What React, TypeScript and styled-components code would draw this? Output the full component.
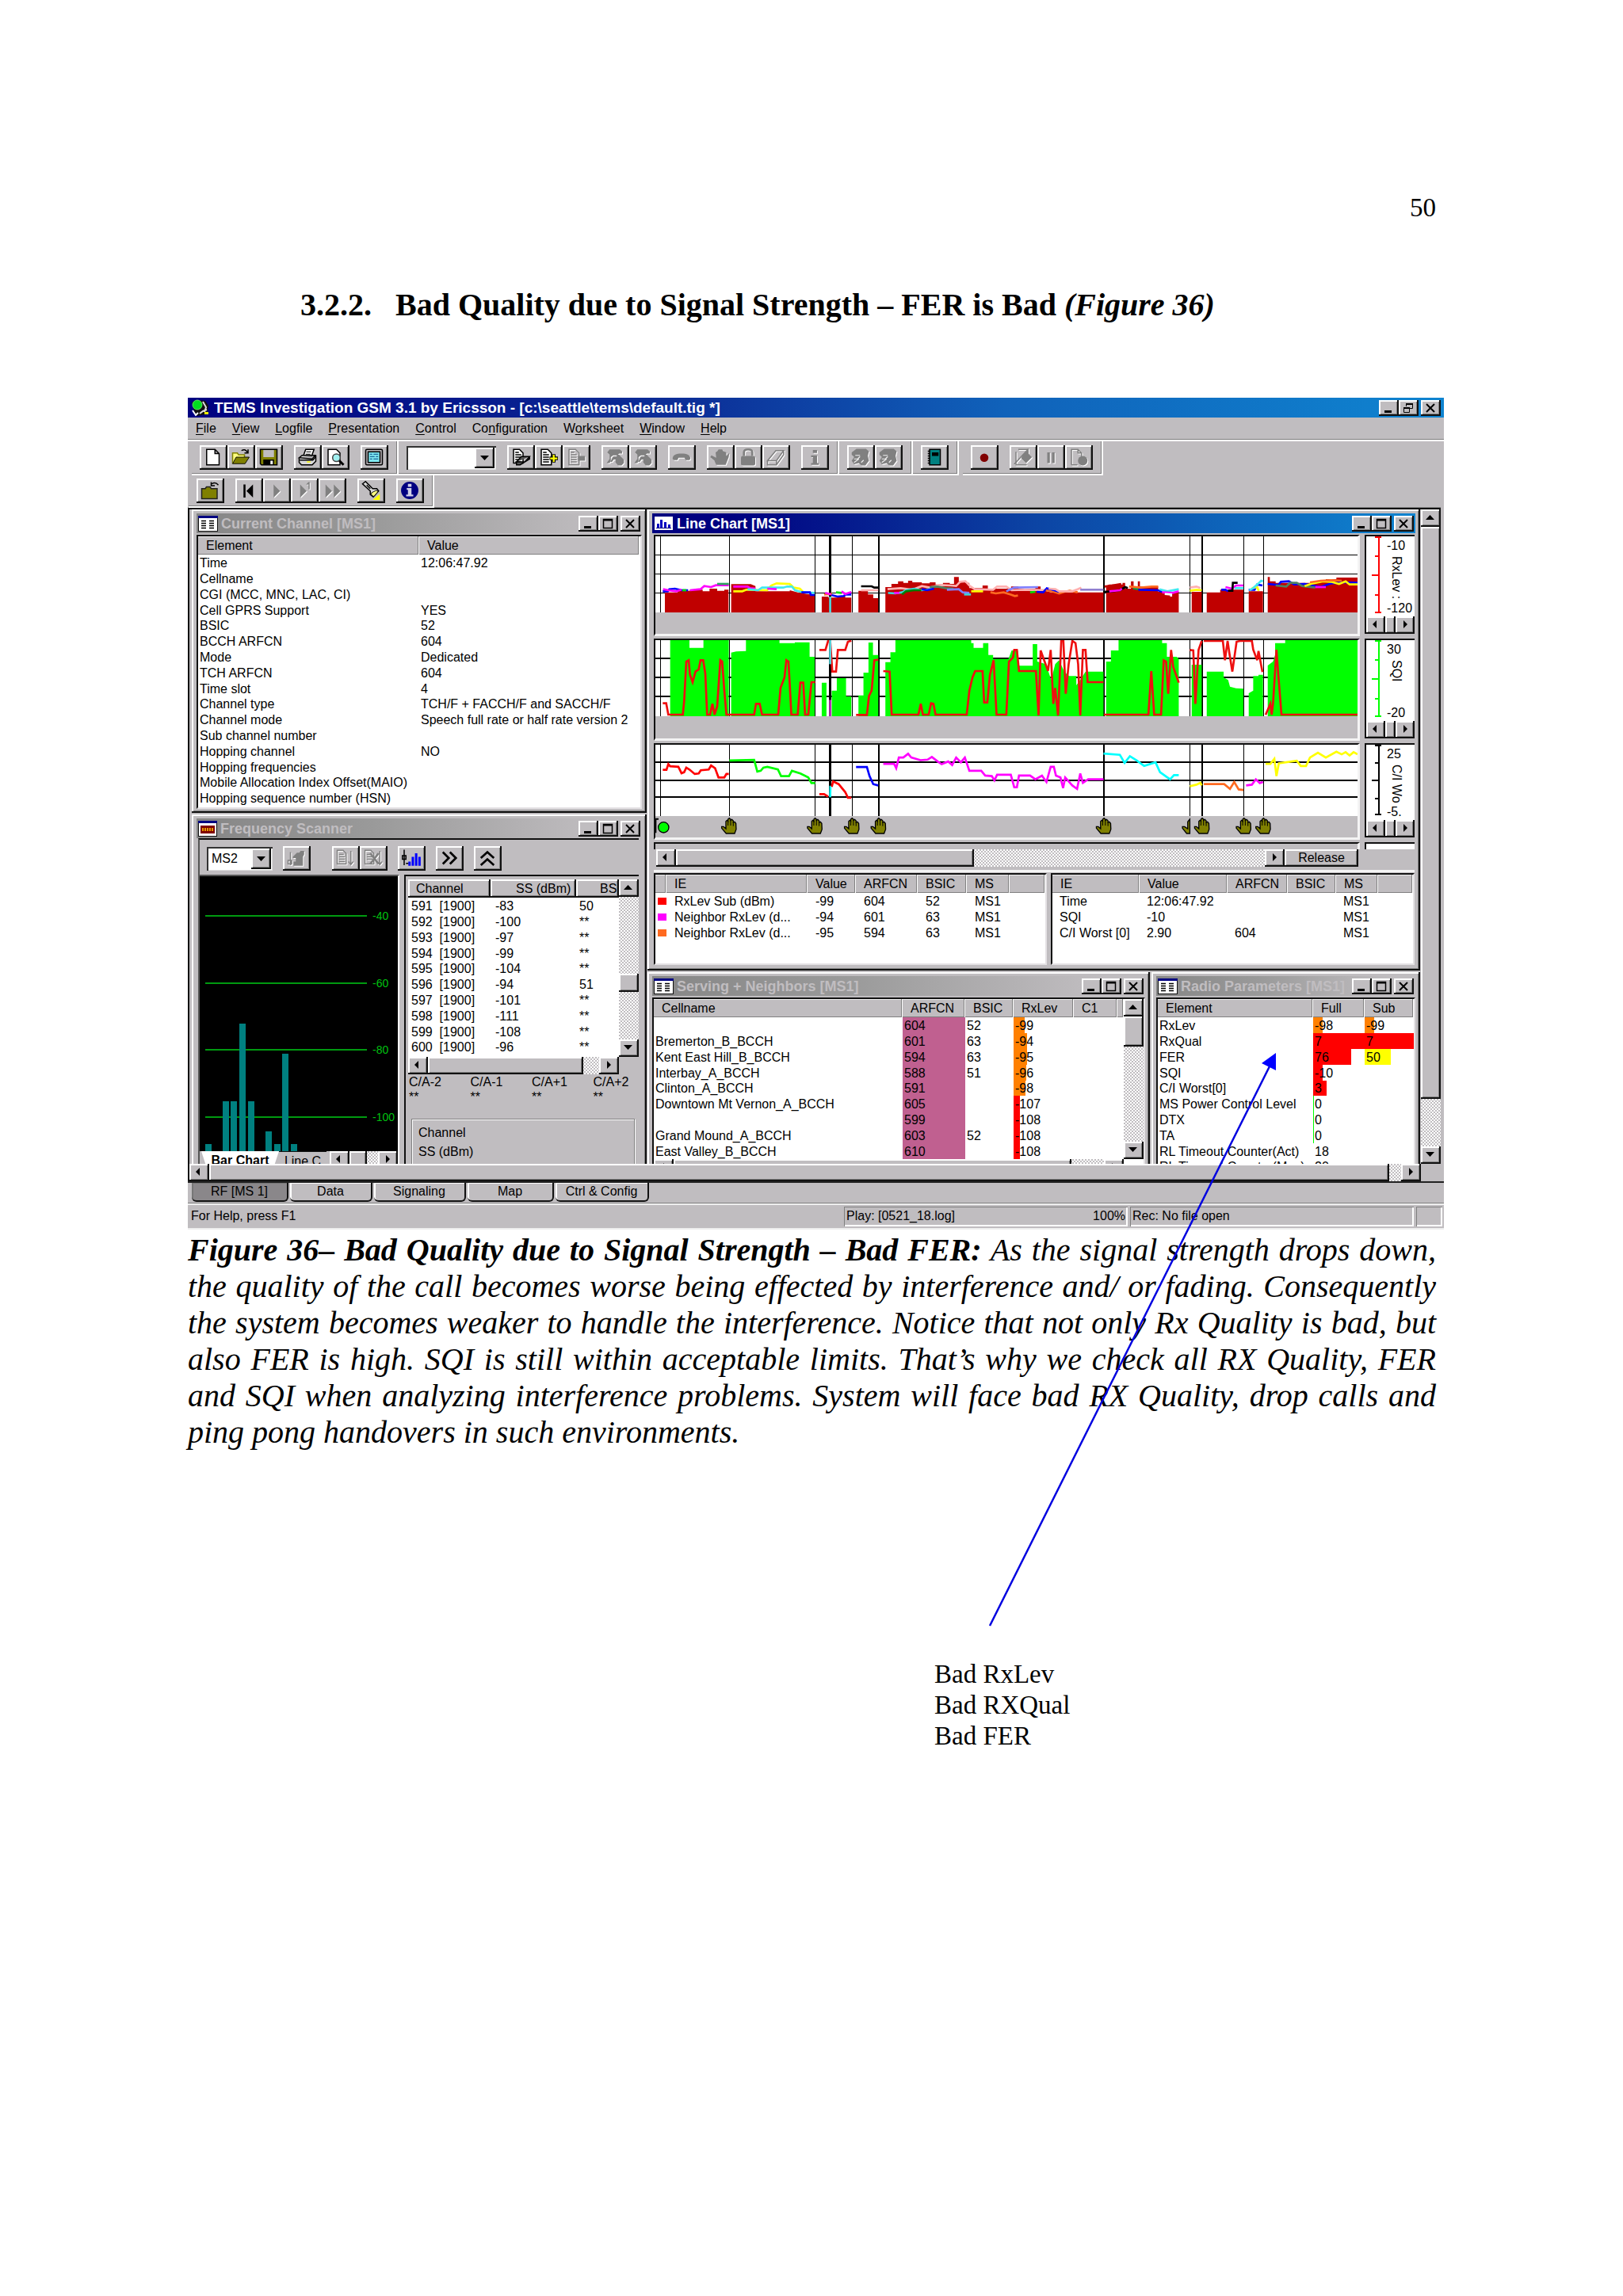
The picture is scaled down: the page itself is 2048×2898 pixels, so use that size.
import React from "react";
import styled, { createGlobalStyle, css } from "styled-components";

const GREY = "#c0bdc0";
const SANS = '"Liberation Sans", Arial, sans-serif';
const SERIF = '"Liberation Serif", "Times New Roman", serif';

const GlobalStyle = createGlobalStyle`
  *, *::before, *::after { box-sizing: border-box; }
  body { margin: 0; background: #fff; color: #000; }
  button, select { font: inherit; color: inherit; margin: 0; }
`;

/* ---------- bevels ---------- */

const raised = css`
  background: ${GREY};
  border: 0;
  border-radius: 0;
  box-shadow: inset -2px -2px 0 #111, inset 2px 2px 0 #fff, inset -3px -3px 0 #808080;
`;

const dither = css`
  background: repeating-conic-gradient(#fff 0 25%, ${GREY} 0 50%) 0 0 / 4px 4px;
`;

/* ---------- document ---------- */

const Page = styled.main`
  min-height: 2898px;
  padding: 243px 226px 0 237px;
  font-family: ${SERIF};
`;

const PageNumber = styled.div`
  padding-right: 10px;
  text-align: right;
  font-size: 33px;
  line-height: 39px;
`;

const Heading = styled.h1`
  display: flex;
  gap: 30px;
  margin: 80px 0 94px 142px;
  font-size: 40px;
  line-height: 46px;
  font-weight: bold;
`;

const Figure = styled.figure`
  position: relative;
  margin: 0;
`;

const Caption = styled.figcaption`
  padding: 3px 10px 0 0;
  font-size: 40px;
  line-height: 46px;
  font-style: italic;
  text-align: justify;
`;

const Notes = styled.p`
  margin: 263px 0 0 942px;
  font-size: 33px;
  line-height: 39px;
`;

const Arrow = styled.svg`
  position: absolute;
  right: 211px;
  top: 827px;
  width: 362px;
  height: 724px;
  overflow: visible;
  pointer-events: none;
`;

/* ---------- application frame ---------- */

const Application = styled.section`
  background: ${GREY};
  font-family: ${SANS};
  font-size: 16px;
  line-height: 20px;
  white-space: nowrap;
`;

const MainTitle = styled.header`
  display: flex;
  align-items: center;
  height: 25px;
  padding: 0 4px;
  gap: 6px;
  background: linear-gradient(90deg, #000080, #0c2f98 40%, #1062ba 65%, #0f84d0);
  color: #fff;
  font-size: 19px;
  font-weight: bold;
`;

const TitleText = styled.span`
  flex: 1;
  min-width: 0;
  overflow: hidden;
`;

const WinButtons = styled.div`
  display: flex;
`;

const WinButton = styled.button<{ $apart?: boolean }>`
  ${raised}
  display: grid;
  place-items: center;
  width: 25px;
  height: 20px;
  padding: 0;
  margin-left: ${(p) => (p.$apart ? 3 : 0)}px;
`;

const MenuBar = styled.nav`
  display: flex;
  align-items: center;
  height: 30px;
  border-bottom: 2px solid #fff;
  box-shadow: inset 0 -1px 0 #808080;
`;

const MenuItem = styled.button`
  border: 0;
  background: none;
  padding: 0 10px;
  u { text-underline-offset: 2px; }
`;

const BarRow = styled.div<{ $second?: boolean }>`
  display: flex;
  height: ${(p) => (p.$second ? 41 : 43)}px;
`;

const Bar = styled.div<{ $gap?: number }>`
  display: flex;
  align-items: center;
  gap: 14px;
  padding: 0 11px 0 10px;
  margin-left: ${(p) => p.$gap || 0}px;
  border-right: 2px solid #fff;
  border-bottom: 2px solid #fff;
  box-shadow: inset -1px -1px 0 #808080;
`;

const Group = styled.div`
  display: flex;
`;

const ToolButton = styled.button`
  ${raised}
  display: grid;
  place-items: center;
  width: 35px;
  height: 31px;
  padding: 0 2px 2px 0;
  svg { display: block; }
  &:disabled svg { filter: drop-shadow(1px 1px 0 #fff); }
`;

const Combo = styled.label<{ $w: number }>`
  display: flex;
  width: ${(p) => p.$w}px;
  height: 30px;
  padding: 2px;
  background: #fff;
  box-shadow: inset 2px 2px 0 #333, inset -1px -1px 0 #ddd;
  select {
    flex: 1;
    min-width: 0;
    appearance: none;
    border: 0;
    padding: 0 0 0 4px;
    background: none;
    border-radius: 0;
  }
`;

const ComboArrow = styled.span`
  ${raised}
  display: grid;
  place-items: center;
  width: 25px;
`;

/* ---------- MDI area ---------- */

const Workspace = styled.div`
  display: grid;
  grid-template-columns: 1fr 25px;
  grid-template-rows: 826px 22px;
  margin-right: 4px;
  border-top: 2px solid #111;
  border-left: 2px solid #111;
  box-shadow: 0 -1px 0 #808080;
`;

const Desk = styled.div`
  display: flex;
  gap: 1px;
  padding: 0 1px 0 3px;
  overflow: hidden;
`;

const Column = styled.div<{ $w?: number }>`
  display: flex;
  flex-direction: column;
  gap: 2px;
  flex: ${(p) => (p.$w ? `0 0 ${p.$w}px` : "1 1 0")};
  min-width: 0;
`;

const Side = styled.div`
  display: flex;
  gap: 2px;
`;

const Win = styled.section<{ $h: number; $w?: number }>`
  display: flex;
  flex-direction: column;
  flex: ${(p) => (p.$w ? `0 0 ${p.$w}px` : "1 1 0")};
  height: ${(p) => p.$h}px;
  min-width: 0;
  padding: 5px 6px;
  background: ${GREY};
  box-shadow: inset -2px -2px 0 #111, inset 2px 2px 0 #fff, inset -3px -3px 0 #808080;
`;

const FixedWin = styled(Win)`
  flex: 0 0 ${(p) => p.$h}px;
`;

const WinTitle = styled.header<{ $active?: boolean }>`
  display: flex;
  align-items: center;
  flex: 0 0 25px;
  gap: 4px;
  padding: 0 2px 0 2px;
  font-size: 18px;
  font-weight: bold;
  color: ${(p) => (p.$active ? "#fff" : GREY)};
  background: ${(p) =>
    p.$active
      ? "linear-gradient(90deg, #000080 10%, #0c44a4 50%, #0f84d0)"
      : `linear-gradient(90deg, #868686, #9a9a9a 40%, ${GREY} 90%)`};
`;

const Client = styled.div`
  flex: 1;
  min-height: 0;
  margin-top: 2px;
  overflow: hidden;
  background: #fff;
  border-top: 2px solid #111;
  border-left: 2px solid #111;
  border-right: 2px solid #e4e2e4;
  border-bottom: 2px solid #e4e2e4;
`;

/* ---------- tables ---------- */

const Grid = styled.table<{ $pad?: number; $head?: number }>`
  width: 100%;
  table-layout: fixed;
  border-collapse: separate;
  border-spacing: 0;
  th {
    height: 23px;
    padding: 0 0 0 ${(p) => p.$head ?? 10}px;
    text-align: left;
    font-weight: normal;
    line-height: 20px;
    background: ${GREY};
    overflow: hidden;
    box-shadow: inset -1px 0 0 #fff, inset -2px -1px 0 #808080, inset 0 1px 0 #eee;
  }
  td {
    height: 20px;
    padding: 0 0 0 ${(p) => p.$pad ?? 2}px;
    line-height: 19px;
    overflow: hidden;
  }
  tbody tr:nth-child(5n) td { height: 19px; }
`;

const Cell = styled.td<{ $fill?: string; $w?: string }>`
  ${(p) =>
    p.$fill &&
    css`
      background: linear-gradient(${p.$fill}, ${p.$fill}) 0 0 / ${p.$w || "100%"} 100% no-repeat;
    `}
`;

const SwatchCell = styled.td`
  && { padding-left: 3px; }
`;

const Swatch = styled.span<{ $c: string }>`
  display: block;
  width: 11px;
  height: 9px;
  background: ${(p) => p.$c};
`;

/* ---------- scroll bars ---------- */

const Scroll = styled.div<{ $v?: boolean }>`
  ${dither}
  display: flex;
  flex-direction: ${(p) => (p.$v ? "column" : "row")};
  ${(p) => (p.$v ? "width: 25px;" : "height: 22px; width: 100%;")}
`;

const ScrollButton = styled.button`
  ${raised}
  display: grid;
  place-items: center;
  flex: 0 0 auto;
  width: 25px;
  height: 22px;
  padding: 0 2px 2px 0;
`;

const Thumb = styled.div<{ $size?: number }>`
  ${raised}
  flex: ${(p) => (p.$size ? `0 0 ${p.$size}px` : "1 1 0")};
`;

const Gap = styled.div<{ $size?: number }>`
  flex: ${(p) => (p.$size ? `0 0 ${p.$size}px` : "1 1 0")};
`;

const PushButton = styled.button`
  ${raised}
  flex: 0 0 93px;
  padding: 0;
`;

/* ---------- line chart window ---------- */

const ChartClient = styled.div`
  display: flex;
  flex-direction: column;
  flex: 1;
  min-height: 0;
  margin: 2px 1px 2px 2px;
`;

const ChartRow = styled.div<{ $h: number }>`
  display: grid;
  grid-template-columns: 1fr 63px;
  column-gap: 6px;
  flex: 0 0 ${(p) => p.$h}px;
  padding-bottom: ${(p) => (p.$h > 20 ? 3 : 0)}px;
`;

const PlotPane = styled.div`
  border-top: 2px solid #111;
  border-left: 2px solid #111;
  border-right: 3px solid #f4f4f4;
  border-bottom: 3px solid #f4f4f4;
  min-width: 0;
  overflow: hidden;
`;

const StubPane = styled(PlotPane)`
  border-bottom: 0;
`;

const Plot = styled.svg<{ $h: number }>`
  display: block;
  width: 100%;
  height: ${(p) => p.$h}px;
`;

const AxisPane = styled.div<{ $stub?: boolean }>`
  display: flex;
  flex-direction: column;
  background: #fff;
  border-top: 2px solid #111;
  border-left: 2px solid #111;
  margin-bottom: ${(p) => (p.$stub ? 0 : 3)}px;
  min-height: 0;
  overflow: hidden;
`;

const AxisBody = styled.div`
  display: grid;
  grid-template-columns: 24px 1fr;
  flex: 1;
  min-height: 0;
`;

const AxisText = styled.div`
  display: flex;
  flex-direction: column;
  justify-content: space-between;
  padding: 3px 0 1px 2px;
  min-height: 0;
  line-height: 18px;
`;

const AxisName = styled.span`
  flex: 1;
  min-height: 0;
  overflow: hidden;
  writing-mode: vertical-rl;
  padding-top: 4px;
  margin-left: 1px;
  width: 20px;
`;

const AxisScroll = styled(Scroll)`
  flex: 0 0 22px;
  button { width: 24px; }
`;

const ScrollRow = styled.div`
  display: grid;
  grid-template-columns: 1fr 71px;
  padding: 0 0 3px 3px;
  border-bottom: 3px solid #f4f4f4;
  flex: 0 0 29px;
`;

const Lists = styled.div`
  display: grid;
  grid-template-columns: 496px 1fr;
  column-gap: 5px;
  flex: 1;
  min-height: 0;
  padding: 1px 0 0;
`;

const List = styled.div`
  background: #fff;
  border-top: 2px solid #111;
  border-left: 2px solid #111;
  border-right: 2px solid #e4e2e4;
  border-bottom: 2px solid #e4e2e4;
  overflow: hidden;
`;

/* ---------- frequency scanner ---------- */

const ScanBody = styled.div`
  display: flex;
  flex-direction: column;
  flex: 1;
  min-height: 0;
  margin: 0 4px 0 2px;
  border-top: 2px solid #111;
  border-left: 2px solid #555;
`;

const ScanBar = styled.div`
  display: flex;
  align-items: center;
  flex: 0 0 44px;
  gap: 13px;
  padding: 3px 9px 0;
`;

const ScanSplit = styled.div`
  display: grid;
  grid-template-columns: 250px 1fr;
  column-gap: 3px;
  flex: 1;
  min-height: 0;
`;

const ScanLeft = styled.div`
  border-top: 2px solid #555;
  border-right: 2px solid #fff;
  margin-right: -2px;
`;

const ScanRight = styled.div`
  display: flex;
  flex-direction: column;
  margin-left: 5px;
  border-top: 2px solid #111;
  border-left: 2px solid #111;
  padding: 4px 0 0 3px;
`;

const BarPlot = styled.svg`
  display: block;
  width: 100%;
  height: 347px;
  background: #000;
  font-size: 14px;
`;

const SheetTabs = styled.div`
  display: flex;
  height: 24px;
  padding-left: 2px;
`;

const SheetTab = styled.button<{ $on?: boolean; $w: number }>`
  flex: 0 0 ${(p) => p.$w}px;
  height: 24px;
  padding: 0;
  line-height: 20px;
  border: 0;
  text-align: center;
  overflow: hidden;
  font-weight: ${(p) => (p.$on ? "bold" : "normal")};
  background: ${(p) => (p.$on ? "#fff" : GREY)};
  border-top: ${(p) => (p.$on ? 0 : 1)}px solid #111;
  clip-path: ${(p) => (p.$on ? "polygon(0 0, 100% 0, 92% 100%, 8% 100%)" : "none")};
`;

const ListArea = styled.div`
  display: grid;
  grid-template-columns: 1fr 25px;
  grid-template-rows: 224px 22px;
`;

const ScanTable = styled(Grid)`
  background: #fff;
  th { ${raised} }
  th:nth-child(2) { padding-left: 32px; }
  th:nth-child(3) { padding-left: 30px; }
  tbody td:nth-child(1) { padding-left: 4px; }
  tbody td:nth-child(2) { padding-left: 6px; }
  tbody td:nth-child(3) { padding-left: 4px; }
`;

const TableBox = styled.div`
  background: #fff;
  overflow: hidden;
`;

const Adjacent = styled.dl`
  display: grid;
  grid-template-columns: repeat(4, 1fr);
  margin: 0 -20px 0 1px;
  line-height: 19px;
  div { min-width: 0; }
  dt, dd { margin: 0; }
`;

const ScanGroup = styled.div`
  display: flex;
  flex-direction: column;
  margin: 18px 5px 0 4px;
  padding: 7px 8px;
  gap: 4px;
  height: 80px;
  border: 1px solid #808080;
  box-shadow: inset 1px 1px 0 #fff, 1px 1px 0 #fff;
`;

/* ---------- worksheet tabs and status bar ---------- */

const Sheets = styled.div`
  display: flex;
  gap: 2px;
  height: 28px;
  padding-left: 5px;
  border-top: 2px solid #222;
  border-bottom: 1px solid #808080;
`;

const Sheet = styled.button<{ $w: number; $on?: boolean }>`
  width: ${(p) => p.$w}px;
  height: 24px;
  padding: 0;
  border: 0;
  border-right: 2px solid #111;
  border-bottom: 2px solid #111;
  border-radius: 0 0 6px 6px;
  background: ${(p) => (p.$on ? "#8a878a" : GREY)};
  box-shadow: inset 2px 1px 0 ${(p) => (p.$on ? "#777" : "#fff")};
`;

const Status = styled.footer`
  display: flex;
  align-items: center;
  gap: 3px;
  height: 33px;
  padding: 0 2px 1px 4px;
  border-top: 2px solid #eee;
  border-bottom: 2px solid #eee;
`;

const StatusText = styled.span`
  flex: 1;
`;

const StatusPane = styled.span<{ $w: number }>`
  display: flex;
  justify-content: space-between;
  width: ${(p) => p.$w}px;
  height: 25px;
  padding: 2px 3px;
  box-shadow: inset 1px 1px 0 #808080, inset -2px -2px 0 #fff;
`;

/* ---------- icons ---------- */

const Tri = ({ d }: { d: "l" | "r" | "u" | "d" }) => {
  const pts = { l: "7,1 7,11 2,6", r: "4,1 4,11 9,6", u: "0,9 11,9 5.5,3", d: "0,3 11,3 5.5,9" }[d];
  return (
    <svg width="11" height="12" viewBox="0 0 11 12" aria-hidden="true">
      <polygon points={pts} fill="#000" />
    </svg>
  );
};

const Ico = ({ children }: { children: React.ReactNode }) => (
  <svg width="26" height="24" viewBox="0 0 17 16" fill="none" strokeWidth="1" aria-hidden="true">
    {children}
  </svg>
);

const G = "#808080";

const docLines = (c: string) => <path d="M4 4h3M4 6h5M4 8h5M4 10h5M4 12h5" stroke={c} />;

const icons: Record<string, React.ReactNode> = {
  new: <path d="M3 1.500h7l3.500 3.500v9.500H3zM10 1.500v3.500h3.500" fill="#fff" stroke="#000" />,
  open: (
    <>
      <path d="M1.500 13.500v-9h4l1 1.500h5v2" fill="#ffff80" stroke="#808000" />
      <path d="M1.500 13.500l3-5.500h11l-3.500 5.500z" fill="#808000" stroke="#000" strokeWidth=".6" />
      <path d="M9 2.500q3-2 5 1.500M14.500 1.500v3h-3" stroke="#000" />
    </>
  ),
  save: (
    <>
      <path d="M1.500 1.500h14v13h-13l-1-1z" fill="#808000" stroke="#000" />
      <path d="M4 2h9v6H4z" fill={GREY} />
      <path d="M4 10h9v4.500H4z" fill="#000" />
      <path d="M10 11h2v3h-2z" fill="#fff" />
    </>
  ),
  print: (
    <>
      <path d="M5 7l2-5.500h7L12 7z" fill="#fff" stroke="#000" />
      <path d="M7.500 3.500h4M7 5.500h4" stroke="#000" strokeWidth=".7" />
      <path d="M1.500 8.500L4 6.500h11l-2.500 3zM1.500 8.500v4l2 2h9l3-3v-5" fill="#d8d8d8" stroke="#000" />
      <path d="M2 10.500h11l2.500-3" stroke="#000" />
      <path d="M8 12h3" stroke="#ff0" />
    </>
  ),
  preview: (
    <>
      <path d="M2.500 1.500h7l3 3v10h-10z" fill="#fff" stroke="#000" />
      <circle cx="9.500" cy="8.500" r="3.200" fill="#a0f0f0" stroke="#444" />
      <path d="M12 11l3.500 3.500" stroke="#000" strokeWidth="2" />
    </>
  ),
  panel: (
    <>
      <rect x="1.500" y="1.500" width="14" height="13" rx="1" fill={GREY} stroke="#000" />
      <rect x="3.500" y="3.500" width="10" height="9" fill="#7fe8f0" stroke="#000" />
      <path d="M5 5.500h2m1 0h4M5 7.500h4m1 0h2M5 9.500h2m1 0h4" stroke="#004080" strokeWidth=".8" />
    </>
  ),
  docErase: (
    <>
      <path d="M2.500 1.500h5l3 3v8.500h-8z" fill="#fff" stroke="#000" />
      {docLines("#000")}
      <path d="M5 12l4-4.500h7l-4 4.500zM5 12v2.500h3l8-5v-2" fill="#555" stroke="#000" />
    </>
  ),
  docAdd: (
    <>
      <path d="M2.500 1.500h5.500l3 3v10H2.500z" fill="#fff" stroke="#000" />
      {docLines("#000")}
      <path d="M13 5.500v7M9.500 9h7" stroke="#000" strokeWidth="3" />
      <path d="M13 6v6M10 9h6" stroke="#ff0" strokeWidth="1.500" />
    </>
  ),
  docRemove: (
    <>
      <path d="M2.500 1.500h5.500l3 3v10H2.500z" stroke={G} />
      {docLines(G)}
      <path d="M10 7h6v4h-6z" fill={G} />
    </>
  ),
  phones: (
    <>
      <path d="M2 4l2-2.500h8.500L14.500 3v2H12L10.500 6.500H7L5 8v3l-1 2H1.500L4 9.500V6z" fill={G} />
      <path d="M7 7.500h3V6h2l1.500 1.500L16 10v3l-2 2h-3l-2-2.500V10H7.500L6 12H4.500z" fill={G} />
    </>
  ),
  handset: <path d="M1 9.500C1 6 4 5 8.500 5s7.500 1 7.500 4.500l-1 1h-3l-1-2h-5l-1 2H2z" fill={G} />,
  handStop: <path d="M5 14.500L3.500 11 0 8l1-1.500 4 2L4.500 4l1.500-1 1-1.500h3l1 1.500 2.500 1V7L16 4.500 15.500 8 13 14.500z" fill={G} />,
  lock: (
    <>
      <path d="M5 7V4q0-2.500 3.500-2.500T12 4v3" stroke={G} strokeWidth="1.800" />
      <rect x="2.500" y="7" width="12" height="8" rx="1.500" fill={G} />
    </>
  ),
  eraser: <path d="M1.500 11l7-8.500h6.500L9 11zM1.500 11v3.500H9L15 6V2.500M9 11v3.500" stroke={G} />,
  infoGrey: <path d="M7 2h3.500v2.500H7zM5.500 6.500h5V13H12v1.500H5.500V13H7V8H5.500z" fill={G} />,
  cloud: (
    <>
      <path d="M1 4l4-3h8l2.500 2-1 4 1 4-3 4H9l-2-2-4 1-2-3 2-3-2-2z" fill={G} />
      <path d="M4 6.500h4m-5 3h3l2-2m-5 5l4-3m2 3l2-2" stroke="#eee" strokeWidth=".8" />
    </>
  ),
  book: (
    <>
      <rect x="4.500" y="1.500" width="9" height="13" fill="#008080" stroke="#000" />
      <path d="M6.500 4h5.500v3H6.500z" fill="#000" />
      <path d="M3 3h2m-2 2h2M3 7h2M3 9h2m-2 2h2m-2 2h2" stroke="#000" strokeWidth="1" />
    </>
  ),
  record: <circle cx="8.500" cy="8.500" r="3.500" fill="#800000" />,
  docEdit: (
    <>
      <path d="M4.500 1.500h8v4M11.500 14.500h-9v-11" stroke={G} />
      <path d="M1 14L13 1" stroke={G} />
      <path d="M8 6l5-4v3l3 3-5 5-4-4z" fill={G} />
    </>
  ),
  pause: <path d="M5.500 4h2.200v9H5.500zM9.500 4h2.200v9H9.500z" fill={G} />,
  docDot: (
    <>
      <path d="M2.500 14.500v-13h5.500l3 3v3M8 1.500v3h3M2.500 14.500h5" stroke={G} />
      <circle cx="12" cy="11" r="4" fill={G} />
    </>
  ),
  folder: (
    <>
      <path d="M1.500 15V6.500h3l1-1.500h3l1 1.500h5V15z" fill="#808000" stroke="#222" />
      <path d="M10 2.500q3-2 5.500 1M9.500 1v3h3" stroke="#000" />
    </>
  ),
  first: <path d="M4 3h1.700v11H4zM12 3v11L6.500 8.500z" fill="#000" />,
  play: <path d="M6 3l5.500 5.500L6 14z" fill={G} />,
  step: <path d="M5 3l5.500 5.500L5 14zM10 3l2-2h1v6h-1V3z" fill={G} />,
  fast: <path d="M3 3l5.500 5.500L3 14zM10 3l5.500 5.500L10 14z" fill={G} />,
  torch: (
    <>
      <path d="M10 16l6-5v5z" fill="#ff0" />
      <path d="M1.500 2.500l2.500-2 6 6h3.500l1.500 2-4.500 5-2.500-2V8.500z" fill="#d8d8d8" stroke="#000" />
      <path d="M9 10l4-2 1.500 1-3.500 4-2-1z" fill="#ffff80" stroke="#000" strokeWidth=".6" />
      <path d="M5 3.500l3 3" stroke="#000" />
    </>
  ),
  info: (
    <>
      <circle cx="8.500" cy="8" r="7.300" fill="#000080" />
      <path d="M7 2.500h3V5H7zM6 6h4v5.500h1.500V13H5.500v-1.500H7v-4H6z" fill="#d0d0e8" />
    </>
  ),
  scanFile: (
    <>
      <path d="M3.500 3v11M1.500 10h3v3h-3z" stroke={G} />
      <path d="M5.500 7L9 3.500h2L12 2h3v3l-1 2v7.500H6V11h2V8H5.500z" fill={G} />
    </>
  ),
  docDown: (
    <>
      <path d="M1.500 1.500h5l2.500 2.500v9H1.500z" stroke={G} />
      <path d="M3 5h4M3 7h5M3 9h5M3 11h5M13 2v11M11 11l2 2.500 2-2.500" stroke={G} />
    </>
  ),
  docCross: (
    <>
      <path d="M1.500 1.500h5l2.500 2.500v9H1.500z" stroke={G} />
      <path d="M3 5h4M3 7h5M3 9h5M14 2v11M12 11l2 2.500 2-2.500" stroke={G} />
      <path d="M6 4l7 9M13 4l-7 9" stroke={G} strokeWidth="1.800" />
    </>
  ),
  bars: (
    <>
      <path d="M6 14.500V11h2v3.500zM8.800 14.500V7h2v7.500zM11.600 14.500V4h2v10.500zM14.400 14.500V7h2v7.500z" fill="#0000ff" />
      <path d="M2.500 1v13M1 6h3v3H1zM4 12.500h2" stroke="#000" />
    </>
  ),
  right: <path d="M3 3l5 5-5 5M9 3l5 5-5 5" stroke="#000" strokeWidth="1.800" />,
  up: <path d="M3 8l5.500-5L14 8M3 14l5.500-5 5.500 5" stroke="#000" strokeWidth="1.800" />,
};

const Tool = ({ name, label, off }: { name: string; label: string; off?: boolean }) => (
  <ToolButton type="button" disabled={off} aria-label={label}>
    <Ico>{icons[name]}</Ico>
  </ToolButton>
);

const AppLogo = () => (
  <svg width="23" height="23" viewBox="0 0 23 23" aria-hidden="true">
    <path d="M1 5l5-3 12 1 4 6-2 11-13 2-3-6z" fill="#111" />
    <path d="M15 4l4 7-2 6M11 19l4-3 5-2" stroke="#ddd" strokeWidth="2" fill="none" />
    <path d="M2 15l4 6 3-3" stroke="#fff" strokeWidth="2" fill="none" />
    <circle cx="8" cy="8" r="6" fill="#00e020" stroke="#8f8" strokeWidth=".7" />
    <path d="M17 17h5v3h-5z" fill="#ee0" />
  </svg>
);

const TableIcon = () => (
  <svg width="25" height="20" viewBox="0 0 25 20" aria-hidden="true">
    <path d="M0 0h25v20H0z" fill="#111" />
    <path d="M1 3h23v16H1z" fill="#fff" />
    <path d="M0 0h25v3H0z" fill="#000080" />
    <path d="M4 6.500h6M4 9.500h6M4 12.500h6M4 15.500h6M14 6.500h6M14 9.500h6M14 12.500h6M14 15.500h6" stroke="#000" strokeWidth="1.600" />
  </svg>
);

const ChartIcon = () => (
  <svg width="25" height="17" viewBox="0 0 23 17" aria-hidden="true">
    <path d="M0 0h23v17H0z" fill="#fff" />
    <path d="M3 14V9h3v5zM7 14V4h3v10zM12 14V7h3v7zM17 14v-4h3v4z" fill="#0000c0" />
    <path d="M2 14.500h19" stroke="#000080" />
  </svg>
);

const ScannerIcon = () => (
  <svg width="24" height="20" viewBox="0 0 24 20" aria-hidden="true">
    <path d="M0 0h24v20H0z" fill="#111" />
    <path d="M1 3h22v16H1z" fill="#fff" />
    <path d="M0 0h24v3H0z" fill="#000080" />
    <path d="M3 6h18v10H3z" fill="#800000" />
    <path d="M6 9v4M9 9v4M12 9v4M15 9v4M18 9v4" stroke="#ffc000" strokeWidth="1.600" />
  </svg>
);

const Controls = ({ restore }: { restore?: boolean }) => (
  <WinButtons>
    <WinButton type="button" aria-label="Minimize">
      <svg width="17" height="14" viewBox="0 0 17 14"><path d="M3 10h9v3H3z" /></svg>
    </WinButton>
    <WinButton type="button" aria-label={restore ? "Restore" : "Maximize"}>
      <svg width="17" height="14" viewBox="0 0 17 14" fill="none" stroke="#000">
        {restore ? (
          <>
            <path d="M5.500 5V1.500h8v6H10" />
            <path d="M5 2h9" strokeWidth="2" />
            <path d="M2.500 6.500h7v6h-7z" />
            <path d="M2 7h8" strokeWidth="2" />
          </>
        ) : (
          <>
            <path d="M2.500 1.500h11v11h-11z" strokeWidth="1.500" />
            <path d="M2 2.500h12" strokeWidth="2" />
          </>
        )}
      </svg>
    </WinButton>
    <WinButton type="button" $apart aria-label="Close">
      <svg width="17" height="14" viewBox="0 0 17 14"><path d="M3 2l10 10M13 2L3 12" stroke="#000" strokeWidth="2" /></svg>
    </WinButton>
  </WinButtons>
);

const TitleBar = ({ icon, text, active }: { icon: React.ReactNode; text: string; active?: boolean }) => (
  <WinTitle $active={active}>
    {icon}
    <TitleText>{text}</TitleText>
    <Controls />
  </WinTitle>
);

const Arrowed = ({ d }: { d: "l" | "r" | "u" | "d" }) => (
  <ScrollButton type="button" aria-label={{ l: "Scroll left", r: "Scroll right", u: "Scroll up", d: "Scroll down" }[d]}>
    <Tri d={d} />
  </ScrollButton>
);

/* ---------- data ---------- */

const menus: [string, string, string][] = [
  ["", "F", "ile"],
  ["", "V", "iew"],
  ["", "L", "ogfile"],
  ["", "P", "resentation"],
  ["", "C", "ontrol"],
  ["Co", "n", "figuration"],
  ["W", "o", "rksheet"],
  ["", "W", "indow"],
  ["", "H", "elp"],
];

const channelRows: [string, string][] = [
  ["Time", "12:06:47.92"],
  ["Cellname", ""],
  ["CGI (MCC, MNC, LAC, CI)", ""],
  ["Cell GPRS Support", "YES"],
  ["BSIC", "52"],
  ["BCCH ARFCN", "604"],
  ["Mode", "Dedicated"],
  ["TCH ARFCN", "604"],
  ["Time slot", "4"],
  ["Channel type", "TCH/F + FACCH/F and SACCH/F"],
  ["Channel mode", "Speech full rate or half rate version 2"],
  ["Sub channel number", ""],
  ["Hopping channel", "NO"],
  ["Hopping frequencies", ""],
  ["Mobile Allocation Index Offset(MAIO)", ""],
  ["Hopping sequence number (HSN)", ""],
];

const scanRows = [
  ["591", "-83", "50"], ["592", "-100", "**"], ["593", "-97", "**"], ["594", "-99", "**"], ["595", "-104", "**"],
  ["596", "-94", "51"], ["597", "-101", "**"], ["598", "-111", "**"], ["599", "-108", "**"], ["600", "-96", "**"],
];

const scanBars = [
  [7, 338], [29, 284], [39, 284], [50, 186], [61, 284], [83, 322], [94, 338], [104, 224], [115, 338],
];

const servingRows: [string, string, string, string, string, number][] = [
  ["", "604", "52", "-99", "#ff8000", 14],
  ["Bremerton_B_BCCH", "601", "63", "-94", "#ff8000", 17],
  ["Kent East Hill_B_BCCH", "594", "63", "-95", "#ff8000", 17],
  ["Interbay_A_BCCH", "588", "51", "-96", "#ff8000", 16],
  ["Clinton_A_BCCH", "591", "", "-98", "#ff8000", 15],
  ["Downtown Mt Vernon_A_BCCH", "605", "", "-107", "#ff0000", 8],
  ["", "599", "", "-108", "#ff0000", 8],
  ["Grand Mound_A_BCCH", "603", "52", "-108", "#ff0000", 8],
  ["East Valley_B_BCCH", "610", "", "-108", "#ff0000", 8],
];

type Gauge = [string, string?, string?];
const radioRows: [string, Gauge, Gauge][] = [
  ["RxLev", ["-98", "#ff8000", "12px"], ["-99", "#ff8000", "12px"]],
  ["RxQual", ["7", "#ff0000", "100%"], ["7", "#ff0000", "100%"]],
  ["FER", ["76", "#ff0000", "48px"], ["50", "#ffff00", "33px"]],
  ["SQI", ["-10", "#ff0000", "12px"], [""]],
  ["C/I Worst[0]", ["3", "#ff0000", "17px"], [""]],
  ["MS Power Control Level", ["0", "#00ff00", "1px"], [""]],
  ["DTX", ["0", "#00ff00", "1px"], [""]],
  ["TA", ["0", "#00ff00", "1px"], [""]],
  ["RL Timeout Counter(Act)", ["18"], [""]],
  ["RL Timeout Counter(Max)", ["20"], [""]],
];

const signalRows = [
  ["#ff0000", "RxLev Sub (dBm)", "-99", "604", "52", "MS1"],
  ["#ff00ff", "Neighbor RxLev (d...", "-94", "601", "63", "MS1"],
  ["#ff6a20", "Neighbor RxLev (d...", "-95", "594", "63", "MS1"],
];

const valueRows = [
  ["Time", "12:06:47.92", "", "", "MS1"],
  ["SQI", "-10", "", "", "MS1"],
  ["C/I Worst [0]", "2.90", "604", "", "MS1"],
];

const Cols = ({ w }: { w: (number | null)[] }) => (
  <colgroup>
    {w.map((n, i) => (
      <col key={i} style={n ? { width: n } : undefined} />
    ))}
  </colgroup>
);

/* ---------- chart drawings ---------- */

const handovers = [71, 331, 656, 796, 897, 1750, 2075, 2122, 2280, 2354];

const Rules = ({ ys, top, bottom }: { ys: number[]; top: number; bottom: number }) => (
  <g stroke="#000" strokeWidth="4" shapeRendering="crispEdges">
    {ys.map((y) => <path key={y} d={`M51 ${y}H2710`} />)}
    {handovers.map((x) => <path key={x} d={`M${x} ${top}V${bottom}`} />)}
    <path d={`M713 ${top}V${bottom}`} strokeWidth="8" />
  </g>
);

const Lines = ({ set }: { set: [string, string][] }) => (
  <g fill="none" strokeWidth="8">
    {set.map(([c, p], i) => <polyline key={i} stroke={c} points={p} />)}
  </g>
);

const RxPlot = () => (
  <Plot $h={96} viewBox="51 114 2659 288" preserveAspectRatio="none" role="img" aria-label="RxLev chart">
    <path d="M51 114H2710V402H51z" fill="#fff" />
    <Rules ys={[184, 256, 328]} top={114} bottom={402} />
    <g fill="#c00000">
      <path d="M87 402V326H135V320H182V316H230V322H256V312H285V320H312V316H328V402z" />
      <path d="M338 402V295H412L430 302V322H560V318L590 326 654 336V402z" />
      <path d="M681 402V342H706V346H740V340H770V346H793V402z" />
      <path d="M820 402V320H856V334H876V348H895V402z" />
      <path d="M922 402V306H945V294H970V284H990V290H1008V282H1024V288H1060V292H1090V288H1112V296H1140V290H1166V294H1182V268H1200V284H1225V290H1240V310H1290V300H1310V312H1398V304H1426V312H1490V304H1510V316L1550 326H1748V402z" />
      <g transform="translate(1530 0)">
        <path d="M228 402V302L240 296H290V290H300V312H322V284H332V304H348V284H356V304H425V324H503V402z" />
        <path d="M552 402V324H590V402zM609 402V326H660V316H748V402zM768 402V322H822V402z" />
        <path d="M840 402V268H848V284H870V290H1020V284H1060V276H1100V270H1180V402z" />
      </g>
    </g>
    <Lines
      set={[
        ["#0000ff", "79,322 98,322 104,314 125,312 150,318 175,318"],
        ["#ff00ff", "80,314 100,318 130,322 150,316"],
        ["#ff00ff", "182,318 222,314 236,302 262,306 280,299 329,299"],
        ["#00e000", "153,318 168,318"],
        ["#2fa060", "285,294 329,294"],
        ["#ff00ff", "346,304 400,304 410,310 430,312"],
        ["#ffff00", "346,322 380,322 396,316 474,318 490,300 510,292 560,294 575,308 598,312 610,324"],
        ["#40e8f0", "400,314 440,318 455,308 535,308 550,304 568,304 580,318 610,326 654,328"],
        ["#ff00ff", "475,312 510,314"],
        ["#0000ff", "604,326 636,326 640,336 654,336"],
        ["#ff6a20", "690,334 720,332"],
        ["#ff00ff", "694,328 716,334"],
        ["#0000ff", "718,336 740,342 765,340 770,334 793,334"],
        ["#00e000", "735,326 756,328"],
        ["#ff00ff", "756,322 770,332 793,325"],
        ["#000000", "830,303 870,303 880,308 895,308"],
        ["#ffb0b0", "830,318 895,318"],
        ["#ffb0b0", "930,314 980,310 1025,316 1060,302 1090,308 1130,298 1170,300 1190,302 1205,286 1225,284 1240,300 1260,314 1330,316 1345,304 1380,304 1400,318 1450,316 1560,318"],
        ["#40d0d8", "932,328 960,330 985,326 1000,318 1030,312 1060,318 1100,312"],
        ["#ff00ff", "955,328 975,328"],
        ["#008000", "985,334 1000,322 1030,318 1058,318"],
        ["#508060", "1090,306 1120,304 1150,310 1180,312"],
        ["#0000ff", "1060,314 1080,318 1106,312"],
        ["#8080ff", "1155,316 1200,314 1215,326 1240,328"],
        ["#40d0d8", "1220,334 1246,334"],
        ["#ffff00", "1247,322 1292,322"],
        ["#ff6a20", "1320,326 1340,330 1370,326 1395,334 1412,340 1424,338"],
        ["#8080ff", "1380,322 1410,308 1500,306"],
        ["#00e000", "1470,326 1490,324"],
        ["#0000ff", "1495,324 1520,326 1530,314 1560,320"],
      ]}
    />
    <g transform="translate(1530 0)">
      <Lines
        set={[
          ["#ff6a20", "0,318 30,324 50,330 70,324 90,320 120,326"],
          ["#0000ff", "0,310 20,314 50,324"],
          ["#ffb0b0", "10,312 36,314 50,322 100,322 120,314 134,308"],
          ["#9080d0", "130,316 218,316"],
          ["#000000", "220,324 250,322 280,318 300,306 310,310"],
          ["#c00000", "222,304 250,300 285,294"],
          ["#ff00ff", "240,322 280,318 288,312"],
          ["#00a040", "330,310 350,314"],
          ["#ff6a20", "315,304 360,308 400,304 425,304"],
          ["#0000ff", "350,316 425,318 440,324"],
          ["#40e8f0", "430,314 460,322 503,314"],
          ["#ff00ff", "440,326 480,328 503,322"],
          ["#ffffff", "450,332 474,334 474,342"],
          ["#ffb0b0", "545,308 570,304 585,310"],
          ["#ffff00", "545,320 570,316 590,318"],
          ["#0000ff", "664,316 680,316 690,322"],
          ["#ff00ff", "680,306 705,312 720,300 748,300"],
          ["#000000", "690,320 706,320 708,290 726,290"],
          ["#40e8f0", "715,310 748,310"],
          ["#0000ff", "768,316 790,316 800,296 820,300"],
          ["#ffff00", "780,310 800,306 806,320"],
          ["#40e8f0", "770,318 785,310 805,292 815,282 822,284"],
          ["#0000ff", "840,294 880,298 890,286 920,284 940,296 980,294 1010,300 1040,306 1080,292 1130,288 1180,290"],
          ["#508060", "870,300 910,304 925,290 950,290 970,302 1020,308"],
          ["#ffff00", "980,302 1010,292 1050,284 1080,286 1110,294 1135,284 1150,296 1180,296"],
          ["#ff6a20", "1000,288 1040,282 1080,280 1120,282"],
          ["#ff00ff", "1020,306 1060,306"],
        ]}
      />
    </g>
    <path d="M713 342V402" stroke="#50d8e0" strokeWidth="8" />
  </Plot>
);

const SqiPlot = () => (
  <Plot $h={96} viewBox="51 509 2659 288" preserveAspectRatio="none" role="img" aria-label="SQI chart">
    <path d="M51 509H2710V797H51z" fill="#fff" />
    <Rules ys={[578, 650, 722]} top={509} bottom={797} />
    <g fill="#00ff00">
      <path d="M107 797V509H180V538H233V509H329V797z" />
      <path d="M338 797V556L357 552 394 550V509H521V520H579V517H635V572H654V797z" />
      <path d="M681 797V670H699V797zM719 797V700H738V653H773V722H793V797z" />
      <path d="M820 797V718H839V632H858V518H875V565H895V797z" />
      <path d="M922 797V592H941V555H960V509H1247V520H1256V538H1292V520H1312V565H1330V580H1388L1400 548H1424V606H1480V524H1497V590L1530 600 1550 660 1565 600 1580 585 1600 630 1618 645H1645V680L1660 660 1680 628H1748V797z" />
      <g transform="translate(1530 0)">
        <path d="M228 797V590H246V548H275V509H440V520H458V572H495L503 580V797z" />
        <path d="M552 797V602H590V797zM609 797V628H673V650L690 660 697 685 720 691 748 693V797z" />
        <path d="M768 797V710L785 700V645H805V640H822V797zM840 797V605L860 590 868 565V520H906V509H1180V797z" />
      </g>
    </g>
    <path d="M331 509V797" stroke="#000" strokeWidth="4" shapeRendering="crispEdges" />
    <g fill="none" stroke="#ee1010" strokeWidth="8">
      <polyline points="79,748 92,748 100,791 155,791 160,740 168,590 177,585 182,640 192,668 203,628 215,620 222,585 232,585 240,635 247,791 258,791 267,750 275,791 285,760 297,585 304,590 312,700 320,791 425,791 432,750 446,750 455,791 516,791 525,690 540,650 547,585 555,590 560,680 566,791 590,791 600,670 611,670 618,791 630,791 642,668 656,668" />
      <polyline points="672,546 695,546 705,512 713,512 721,628 735,628 742,546 770,546 780,515 793,511" />
      <polyline points="811,792 852,792 860,720 870,700 880,585 895,583" />
      <polyline points="914,626 938,628 946,791 1047,791 1056,750 1064,791 1086,791 1095,748 1104,750 1112,791 1230,791 1240,700 1252,650 1262,626 1290,626 1296,745 1308,745 1318,640 1332,585 1343,791 1380,791 1390,590 1405,575 1410,546 1420,546 1428,626 1492,626 1502,794 1510,548 1525,590 1538,625 1548,546 1558,750 1565,690 1576,794 1588,512 1596,512 1605,712 1616,600 1630,512 1642,520 1652,600 1660,794 1670,546 1680,546 1688,668 1748,668" />
      <g transform="translate(1530 0)">
        <polyline points="220,791 388,791 399,626 410,791 436,791 446,585 455,590 463,712 474,546 482,610 503,670" />
        <polyline points="545,546 558,548 566,750 578,546 590,512" />
        <polyline points="598,512 670,512 678,585 688,512 695,560 706,628 722,515 735,512 780,512 785,545 800,585 805,550 820,630" />
        <polyline points="832,792 850,750 855,791 860,750 873,545 880,640 892,791 1180,791" />
      </g>
    </g>
    <path d="M713 509V600" stroke="#50d8e0" strokeWidth="8" />
    <path d="M713 735V797" stroke="#c030c0" strokeWidth="8" />
  </Plot>
);

const CiPlot = () => (
  <Plot $h={90} viewBox="51 902 2659 268" preserveAspectRatio="none" role="img" aria-label="C/I Worst chart">
    <path d="M51 902H2710V1170H51z" fill="#fff" />
    <Rules ys={[968, 1036, 1099]} top={902} bottom={1170} />
    <Lines
      set={[
        ["#ff0000", "79,996 93,996 100,975 107,983 138,985 150,1009 160,1005 168,988 180,995 200,1012 215,1010 223,998 253,995 262,980 277,990 290,1025 312,1025 320,1012 329,1012"],
        ["#00ff00", "331,961 425,959 437,1003 450,1000 460,988 475,985 515,995 527,1020 557,1020 568,1000 600,1010 630,1025 642,1046 656,1046"],
        ["#ff0000", "672,1088 690,1088 705,1097"],
        ["#00ffff", "713,1099 714,1056"],
        ["#ff0000", "719,1060 724,1040 745,1050 770,1080 780,1101 793,1101"],
        ["#0000ff", "811,986 852,986 862,1020 876,1050 895,1055"],
        ["#ff00ff", "914,974 955,974 963,990 973,950 990,950 1008,936 1020,950 1055,960 1082,958 1098,948 1120,965 1135,975 1160,965 1175,978 1190,950 1208,968 1223,950 1240,1000 1285,1000 1300,1018 1325,1020 1335,1036 1345,1015 1397,1015 1410,1062 1420,1062 1428,1018 1470,1018 1490,1032 1515,1018 1532,1042 1548,985 1560,985 1568,1018 1585,1025 1595,1065 1603,1025 1630,1055 1648,1068 1660,1010 1670,1045 1690,1032 1748,1032"],
      ]}
    />
    <g transform="translate(1530 0)">
      <Lines
        set={[
          ["#00ffff", "218,935 280,940 298,970 318,945 345,962 372,982 415,968 432,1005 470,1032 485,1016 503,1016"],
          ["#ffff00", "545,1058 570,1052 585,1045 590,1055"],
          ["#ff6a20", "598,1050 675,1050 697,1068 713,1042 730,1070 748,1072"],
          ["#ff00ff", "758,1055 780,1052 795,1032 810,1046 822,1042"],
          ["#ffff00", "832,974 850,974 865,955 873,1020 882,972 950,962 965,982 985,982 1000,950 1030,932 1060,950 1100,928 1120,938 1135,930 1150,942 1165,930 1180,938"],
        ]}
      />
    </g>
  </Plot>
);

const HAND = "M-12 58L-29 38V32H-22L-13 40V12L-9 8-5 12V4L0 0 5 4V8L10 5 15 10V16L20 14 25 20 26 42 20 58z";

const EventStrip = () => (
  <Plot $h={27} viewBox="51 1170 2659 81" preserveAspectRatio="none" role="img" aria-label="Events">
    <path d="M51 1178h12v6h-8v50h-4z" />
    <circle cx="82" cy="1213" r="20" fill="#00ff00" stroke="#000" strokeWidth="4" />
    {[331, 656, 796, 897, 1750, 2122, 2280, 2354].map((x) => (
      <g key={x} transform={`translate(${x} 1178)`}>
        <path d={HAND} fill="#808000" stroke="#000" strokeWidth="4" />
        <path d="M-5 12V28M5 8V28M15 16V30" stroke="#000" strokeWidth="3" />
      </g>
    ))}
    <path d="M2063 1236l-16-20v-6h8l12 8v-26l8-10v54z" fill="#808000" stroke="#000" strokeWidth="4" />
  </Plot>
);

const Axis = ({ color, top, name, bottom, h }: { color: string; top: string; name: string; bottom: string; h: number }) => (
  <AxisPane>
    <AxisBody>
      <svg width="24" height={h} viewBox={`0 0 24 ${h}`} fill="none" stroke={color} strokeWidth="2" aria-hidden="true">
        <path d={`M16 1V${h - 2}M11 1h8M11 ${h - 2}h8M11 ${Math.round(h / 4)}h5M7 ${Math.round(h / 2)}h9M11 ${Math.round((h * 3) / 4)}h5`} />
      </svg>
      <AxisText>
        <span>{top}</span>
        <AxisName>{name}</AxisName>
        <span>{bottom}</span>
      </AxisText>
    </AxisBody>
    <AxisScroll>
      <Arrowed d="l" />
      <Thumb />
      <Arrowed d="r" />
    </AxisScroll>
  </AxisPane>
);

/* ---------- windows ---------- */

const CurrentChannel = () => (
  <FixedWin $h={383}>
    <TitleBar icon={<TableIcon />} text="Current Channel [MS1]" />
    <Client>
      <Grid>
        <Cols w={[279, 278, null]} />
        <thead>
          <tr><th>Element</th><th>Value</th><th /></tr>
        </thead>
        <tbody>
          {channelRows.map(([k, v]) => (
            <tr key={k}><td>{k}</td><td colSpan={2}>{v}</td></tr>
          ))}
        </tbody>
      </Grid>
    </Client>
  </FixedWin>
);

const FrequencyScanner = () => (
  <FixedWin $h={460}>
    <TitleBar icon={<ScannerIcon />} text="Frequency Scanner" />
    <ScanBody>
      <ScanBar>
        <Combo $w={83}>
          <select aria-label="Mobile" defaultValue="MS2"><option>MS2</option><option>MS1</option></select>
          <ComboArrow><Tri d="d" /></ComboArrow>
        </Combo>
        <Group><Tool name="scanFile" label="Scan file" off /></Group>
        <Gap $size={1} />
        <Group>
          <Tool name="docDown" label="Add channels" off />
          <Tool name="docCross" label="Remove channels" off />
        </Group>
        <Group><Tool name="bars" label="Bar settings" /></Group>
        <Group><Tool name="right" label="Next" /></Group>
        <Group><Tool name="up" label="Top" /></Group>
      </ScanBar>
      <ScanSplit>
        <ScanLeft>
          <BarPlot viewBox="0 0 250 347" preserveAspectRatio="none" role="img" aria-label="Signal strength bar chart">
            {[50, 135, 219, 304].map((y, i) => (
              <g key={y}>
                <path d={`M7 ${y}H211`} stroke="#009a10" strokeWidth="2" />
                <text x="218" y={y + 5} fill="#00c010">{[-40, -60, -80, -100][i]}</text>
              </g>
            ))}
            {scanBars.map(([x, y]) => <rect key={x} x={x} y={y} width="8" height={347 - y} fill="#008080" />)}
          </BarPlot>
          <SheetTabs>
            <SheetTab type="button" $on $w={98}>Bar Chart</SheetTab>
            <SheetTab type="button" $w={60}>Line C</SheetTab>
            <Gap $size={4} />
            <Scroll>
              <Arrowed d="l" />
              <Thumb $size={22} />
              <Gap />
              <Arrowed d="r" />
            </Scroll>
          </SheetTabs>
        </ScanLeft>
        <ScanRight>
          <ListArea>
            <TableBox>
              <ScanTable>
                <Cols w={[104, 108, null]} />
                <thead><tr><th>Channel</th><th>SS (dBm)</th><th>BS</th></tr></thead>
                <tbody>
                  {scanRows.map(([c, s, b]) => (
                    <tr key={c}><td>{c}&nbsp; [1900]</td><td>{s}</td><td>{b}</td></tr>
                  ))}
                </tbody>
              </ScanTable>
            </TableBox>
            <Scroll $v>
              <Arrowed d="u" />
              <Gap $size={97} />
              <Thumb $size={23} />
              <Gap />
              <Arrowed d="d" />
            </Scroll>
            <Scroll>
              <Arrowed d="l" />
              <Thumb $size={196} />
              <Gap />
              <Arrowed d="r" />
            </Scroll>
          </ListArea>
          <Adjacent>
            {["C/A-2", "C/A-1", "C/A+1", "C/A+2"].map((n) => (
              <div key={n}><dt>{n}</dt><dd>**</dd></div>
            ))}
          </Adjacent>
          <ScanGroup>
            <span>Channel</span>
            <span>SS (dBm)</span>
          </ScanGroup>
        </ScanRight>
      </ScanSplit>
    </ScanBody>
  </FixedWin>
);

const LineChart = () => (
  <FixedWin $h={582}>
    <TitleBar active icon={<ChartIcon />} text="Line Chart [MS1]" />
    <ChartClient>
      <ChartRow $h={131}>
        <PlotPane><RxPlot /></PlotPane>
        <Axis color="#ff0000" top="-10" name="RxLev :" bottom="-120" h={98} />
      </ChartRow>
      <ChartRow $h={132}>
        <PlotPane><SqiPlot /></PlotPane>
        <Axis color="#00ff00" top="30" name="SQI" bottom="-20" h={98} />
      </ChartRow>
      <ChartRow $h={124}>
        <PlotPane><CiPlot /><EventStrip /></PlotPane>
        <Axis color="#000000" top="25" name="C/I Wo" bottom="-5." h={90} />
      </ChartRow>
      <ChartRow $h={9}>
        <StubPane />
        <AxisPane $stub />
      </ChartRow>
      <ScrollRow>
        <Scroll>
          <Arrowed d="l" />
          <Thumb $size={376} />
          <Gap />
          <Arrowed d="r" />
          <PushButton type="button">Release</PushButton>
        </Scroll>
      </ScrollRow>
      <Lists>
        <List>
          <Grid $pad={10}>
            <Cols w={[14, 178, 61, 78, 62, 54, null]} />
            <thead><tr><th /><th>IE</th><th>Value</th><th>ARFCN</th><th>BSIC</th><th>MS</th><th /></tr></thead>
            <tbody>
              {signalRows.map(([c, ...cells]) => (
                <tr key={cells[1]}>
                  <SwatchCell><Swatch $c={c} /></SwatchCell>
                  {cells.map((t, i) => <td key={i}>{t}</td>)}
                </tr>
              ))}
            </tbody>
          </Grid>
        </List>
        <List>
          <Grid $pad={9}>
            <Cols w={[110, 111, 76, 61, 53, null]} />
            <thead><tr><th>IE</th><th>Value</th><th>ARFCN</th><th>BSIC</th><th>MS</th><th /></tr></thead>
            <tbody>
              {valueRows.map((r) => (
                <tr key={r[0]}>{r.map((t, i) => <td key={i}>{t}</td>)}</tr>
              ))}
            </tbody>
          </Grid>
        </List>
      </Lists>
    </ChartClient>
  </FixedWin>
);

const ServingClient = styled(Client)`
  display: grid;
  grid-template-columns: 1fr 25px;
  grid-template-rows: 202px 22px;
`;

const Serving = () => (
  <Win $h={260} $w={634}>
    <TitleBar icon={<TableIcon />} text="Serving + Neighbors [MS1]" />
    <ServingClient>
      <TableBox>
        <Grid $pad={2}>
          <Cols w={[314, 79, 61, 76, 55, null]} />
          <thead><tr><th>Cellname</th><th>ARFCN</th><th>BSIC</th><th>RxLev</th><th>C1</th><th /></tr></thead>
          <tbody>
            {servingRows.map(([n, a, b, r, c, w]) => (
              <tr key={a}>
                <td>{n}</td>
                <Cell $fill="#c06090">{a}</Cell>
                <td>{b}</td>
                <Cell $fill={c} $w={`${w}px`}>{r}</Cell>
                <td colSpan={2} />
              </tr>
            ))}
          </tbody>
        </Grid>
      </TableBox>
      <Scroll $v>
        <Arrowed d="u" />
        <Thumb $size={38} />
        <Gap />
        <Arrowed d="d" />
      </Scroll>
      <Scroll>
        <Arrowed d="l" />
        <Thumb $size={502} />
        <Gap />
        <Arrowed d="r" />
      </Scroll>
    </ServingClient>
  </Win>
);

const Radio = () => (
  <Win $h={260}>
    <TitleBar icon={<TableIcon />} text="Radio Parameters [MS1]" />
    <Client>
      <Grid $pad={2}>
        <Cols w={[196, 65, null]} />
        <thead><tr><th>Element</th><th>Full</th><th>Sub</th></tr></thead>
        <tbody>
          {radioRows.map(([n, f, s]) => (
            <tr key={n}>
              <td>{n}</td>
              <Cell $fill={f[1]} $w={f[2]}>{f[0]}</Cell>
              <Cell $fill={s[1]} $w={s[2]}>{s[0]}</Cell>
            </tr>
          ))}
        </tbody>
      </Grid>
    </Client>
  </Win>
);

const Toolbars = () => (
  <>
    <BarRow>
      <Bar $gap={5}>
        <Group>
          <Tool name="new" label="New" />
          <Tool name="open" label="Open" />
          <Tool name="save" label="Save" />
        </Group>
        <Group>
          <Tool name="print" label="Print" />
          <Tool name="preview" label="Print preview" />
        </Group>
        <Group><Tool name="panel" label="Panel" /></Group>
      </Bar>
      <Bar>
        <Combo $w={113}>
          <select aria-label="Equipment" defaultValue=""><option value="" /></select>
          <ComboArrow><Tri d="d" /></ComboArrow>
        </Combo>
        <Group>
          <Tool name="docErase" label="Edit list" />
          <Tool name="docAdd" label="Add" />
          <Tool name="docRemove" label="Remove" off />
        </Group>
        <Group>
          <Tool name="phones" label="Connect" off />
          <Tool name="phones" label="Disconnect" off />
        </Group>
        <Group><Tool name="handset" label="Dial" off /></Group>
        <Group>
          <Tool name="handStop" label="Stop" off />
          <Tool name="lock" label="Lock" off />
          <Tool name="eraser" label="Erase" off />
        </Group>
        <Group><Tool name="infoGrey" label="Information" off /></Group>
      </Bar>
      <Bar>
        <Group>
          <Tool name="cloud" label="Link" off />
          <Tool name="cloud" label="Unlink" off />
        </Group>
      </Bar>
      <Bar>
        <Group><Tool name="book" label="Report" /></Group>
      </Bar>
      <Bar $gap={5}>
        <Group><Tool name="record" label="Record" /></Group>
        <Group>
          <Tool name="docEdit" label="Insert mark" off />
          <Tool name="pause" label="Pause" off />
          <Tool name="docDot" label="Swap logfile" off />
        </Group>
      </Bar>
    </BarRow>
    <BarRow $second>
      <Bar $gap={1}>
        <Group><Tool name="folder" label="Open logfile" /></Group>
        <Group>
          <Tool name="first" label="Rewind" />
          <Tool name="play" label="Play" off />
          <Tool name="step" label="Step" off />
          <Tool name="fast" label="Fast forward" off />
        </Group>
        <Group><Tool name="torch" label="Find" /></Group>
        <Group><Tool name="info" label="Logfile information" /></Group>
      </Bar>
    </BarRow>
  </>
);

export default function App() {
  return (
    <Page>
      <GlobalStyle />
      <PageNumber>50</PageNumber>
      <Heading>
        <span>3.2.2.</span>
        <span>Bad Quality due to Signal Strength – FER is Bad <i>(Figure 36)</i></span>
      </Heading>
      <Figure>
        <Application>
          <MainTitle>
            <AppLogo />
            <TitleText>TEMS Investigation GSM 3.1 by Ericsson - [c:\seattle\tems\default.tig *]</TitleText>
            <Controls restore />
          </MainTitle>
          <MenuBar>
            {menus.map(([a, u, b]) => (
              <MenuItem type="button" key={a + u + b}>{a}<u>{u}</u>{b}</MenuItem>
            ))}
          </MenuBar>
          <Toolbars />
          <Workspace>
            <Desk>
              <Column $w={574}>
                <CurrentChannel />
                <FrequencyScanner />
              </Column>
              <Column>
                <LineChart />
                <Side>
                  <Serving />
                  <Radio />
                </Side>
              </Column>
            </Desk>
            <Scroll $v>
              <Arrowed d="u" />
              <Thumb $size={722} />
              <Gap />
              <Arrowed d="d" />
            </Scroll>
            <Scroll>
              <Arrowed d="l" />
              <Thumb />
              <Gap $size={15} />
              <Arrowed d="r" />
            </Scroll>
          </Workspace>
          <Sheets>
            <Sheet type="button" $w={122} $on>RF [MS 1]</Sheet>
            <Sheet type="button" $w={104}>Data</Sheet>
            <Sheet type="button" $w={116}>Signaling</Sheet>
            <Sheet type="button" $w={109}>Map</Sheet>
            <Sheet type="button" $w={118}>Ctrl &amp; Config</Sheet>
          </Sheets>
          <Status>
            <StatusText>For Help, press F1</StatusText>
            <StatusPane $w={358}><span>Play: [0521_18.log]</span><span>100%</span></StatusPane>
            <StatusPane $w={358}><span>Rec: No file open</span></StatusPane>
            <StatusPane $w={33} />
          </Status>
        </Application>
        <Caption>
          <b>Figure 36– Bad Quality due to Signal Strength – Bad FER:</b> As the signal strength drops down, the
          quality of the call becomes worse being effected by interference and/ or fading. Consequently the system
          becomes weaker to handle the interference. Notice that not only Rx Quality is bad, but also FER is high. SQI
          is still within acceptable limits. That’s why we check all RX Quality, FER and SQI when analyzing
          interference problems. System will face bad RX Quality, drop calls and ping pong handovers in such
          environments.
        </Caption>
        <Arrow viewBox="0 0 362 724" aria-hidden="true">
          <path d="M0 723L353 17" stroke="#0000e0" strokeWidth="2.500" />
          <path d="M361 0V22L343 13z" fill="#0000ff" />
        </Arrow>
      </Figure>
      <Notes>
        Bad RxLev<br />
        Bad RXQual<br />
        Bad FER
      </Notes>
    </Page>
  );
}
